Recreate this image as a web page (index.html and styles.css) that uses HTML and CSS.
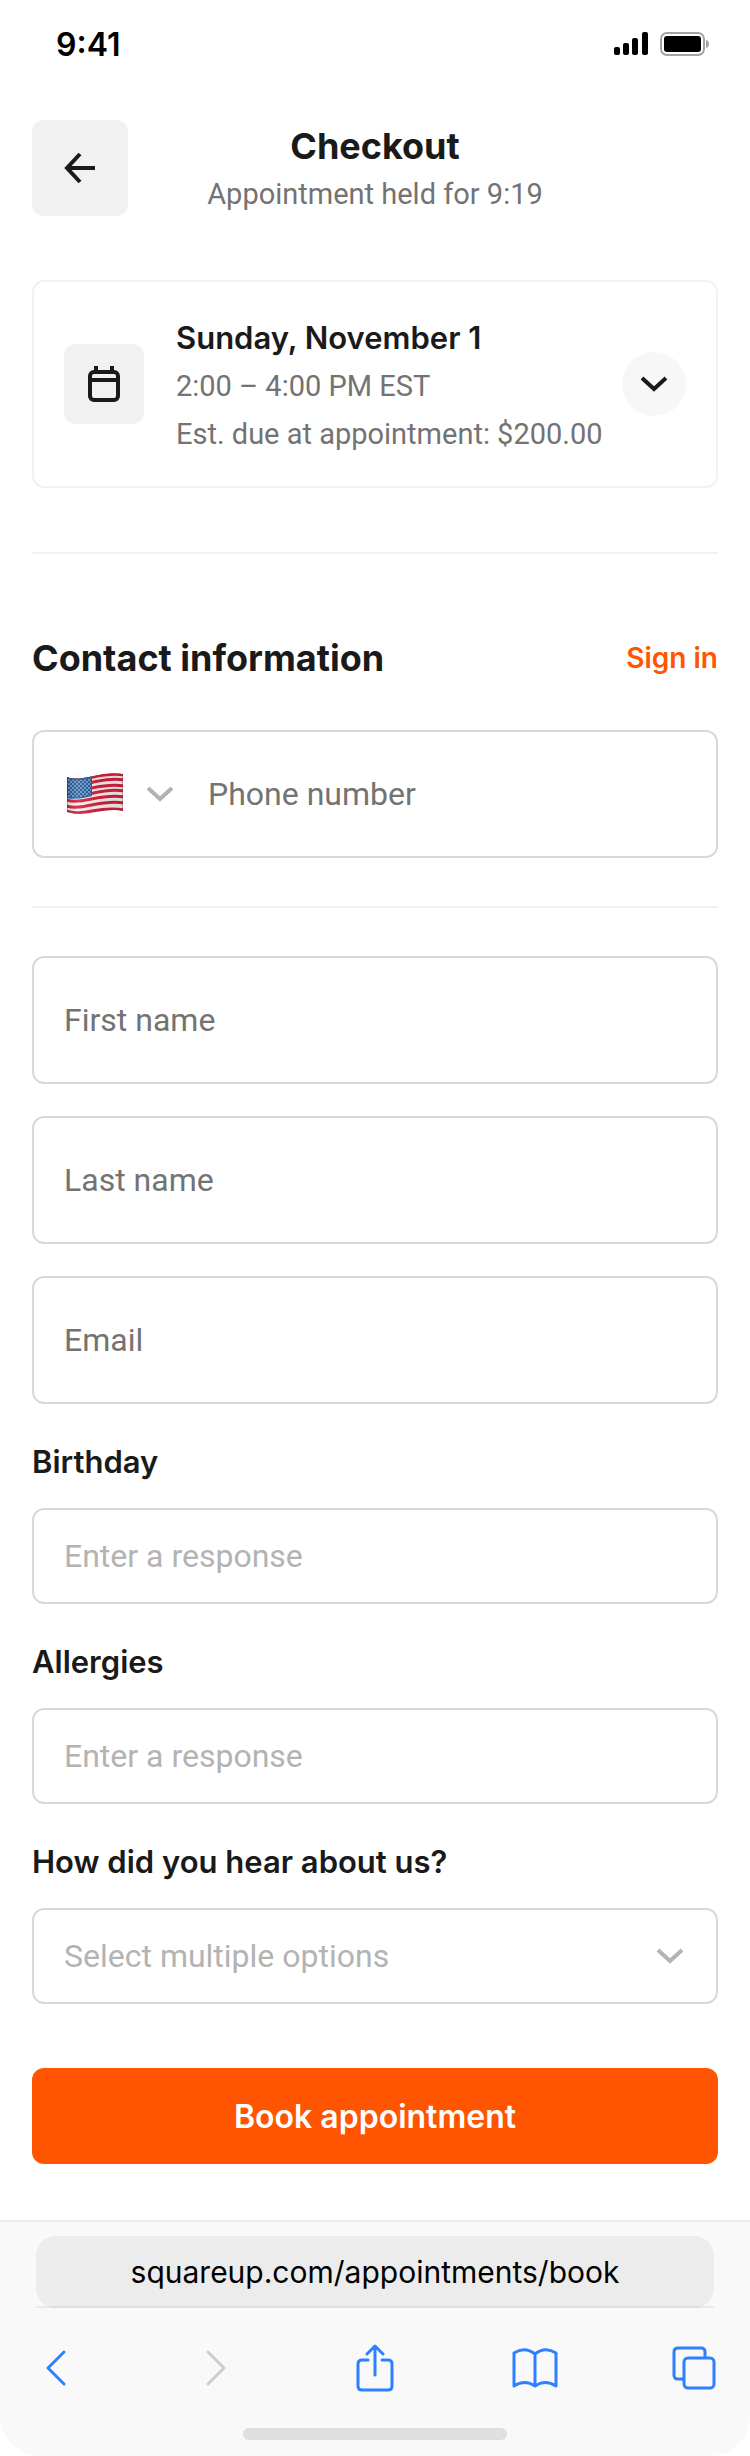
FILE: index.html
```html
<!DOCTYPE html>
<html lang="en">
<head>
    <meta charset="UTF-8">
    <meta name="viewport" content="width=device-width, initial-scale=1.0">
    <title>Checkout</title>
    <link rel="stylesheet" href="styles.css">
</head>
<body>
    <div class="status-bar">
        <span class="time">9:41</span>
        <div class="status-icons">
            <svg width="36" height="24" viewBox="0 0 36 24">
                <rect x="0" y="15" width="6" height="8" rx="2"/>
                <rect x="9" y="11" width="6" height="12" rx="2"/>
                <rect x="18" y="6" width="6" height="17" rx="2"/>
                <rect x="28" y="0" width="6" height="23" rx="2"/>
            </svg>
            <svg width="50" height="24" viewBox="0 0 50 24">
                <rect x="1" y="1" width="43" height="22" rx="6" fill="none" stroke="#a3a3a3" stroke-width="2"/>
                <rect x="4" y="4" width="37" height="16" rx="3"/>
                <path d="M46 8c4 1 4 7 0 8z" fill="#a3a3a3"/>
            </svg>
        </div>
    </div>

    <header class="header">
        <button class="back" aria-label="Back">
            <svg width="32" height="32" viewBox="0 0 32 32" fill="none" stroke="#1a1a1a" stroke-width="4">
                <path d="M31 16H3M16 2L3 16l13 14"/>
            </svg>
        </button>
        <div class="header-text">
            <h1>Checkout</h1>
            <p>Appointment held for 9:19</p>
        </div>
    </header>

    <main>
        <section class="summary">
            <div class="summary-icon">
                <svg width="32" height="36" viewBox="0 0 32 36" fill="none" stroke="#1a1a1a" stroke-width="4">
                    <rect x="2" y="6" width="28" height="28" rx="4"/>
                    <path d="M2 14h28M8 0v6M24 0v6"/>
                </svg>
            </div>
            <div class="summary-text">
                <h2>Sunday, November 1</h2>
                <p>2:00 – 4:00 PM EST</p>
                <p>Est. due at appointment: $200.00</p>
            </div>
            <button class="expand" aria-label="Show details">
                <svg width="28" height="18" viewBox="0 0 28 18" fill="none" stroke="#1a1a1a" stroke-width="4">
                    <path d="M2 3l12 11L26 3"/>
                </svg>
            </button>
        </section>

        <hr>

        <form class="form">
            <div class="form-title">
                <h2>Contact information</h2>
                <a href="#">Sign in</a>
            </div>

            <div class="phone">
                <button type="button" class="country" aria-label="Country: United States">
                    <svg width="58" height="42" viewBox="0 0 58 42">
                        <defs>
                            <clipPath id="flag">
                                <path d="M1 4C16 10 34-3 57 1V38C38 34 22 45 1 39z"/>
                            </clipPath>
                            <linearGradient id="shade" x1="0" y1="0" x2="1" y2="0">
                                <stop offset="0" stop-color="#000" stop-opacity=".15"/>
                                <stop offset=".2" stop-color="#fff" stop-opacity=".1"/>
                                <stop offset=".6" stop-color="#000" stop-opacity=".08"/>
                                <stop offset="1" stop-color="#000" stop-opacity=".1"/>
                            </linearGradient>
                            <pattern id="stars" width="4" height="4" patternUnits="userSpaceOnUse">
                                <circle cx="1" cy="1" r=".7" fill="#fff"/>
                                <circle cx="3" cy="3" r=".7" fill="#fff"/>
                            </pattern>
                        </defs>
                        <g clip-path="url(#flag)">
                            <rect width="58" height="42" fill="#f5f3f3"/>
                            <g fill="none" stroke="#d8203a" stroke-width="3">
                                <path d="M0 5C16 11 34-2 58 2"/>
                                <path d="M0 11C16 16 34 3 58 7"/>
                                <path d="M0 16C16 21 34 9 58 13"/>
                                <path d="M0 22C16 27 34 14 58 18"/>
                                <path d="M0 27C16 32 34 20 58 24"/>
                                <path d="M0 33C16 38 34 26 58 30"/>
                                <path d="M0 38C16 44 34 32 58 37"/>
                            </g>
                            <path d="M0 3C10 7 18 5 26 3V23C18 25 10 27 0 25z" fill="#1f5a9e"/>
                            <path d="M2 6C10 8 18 7 25 5V22C18 24 10 25 2 24z" fill="url(#stars)"/>
                            <path d="M1 4C16 10 34-3 57 1V38C38 34 22 45 1 39z" fill="url(#shade)" stroke="#5a2530" stroke-opacity=".5"/>
                        </g>
                    </svg>
                    <svg width="28" height="18" viewBox="0 0 28 18" fill="none" stroke="#b3b3b3" stroke-width="4">
                        <path d="M2 3l12 11L26 3"/>
                    </svg>
                </button>
                <input type="tel" placeholder="Phone number" aria-label="Phone number">
            </div>

            <hr>

            <div class="names">
                <input class="field tall" type="text" placeholder="First name" aria-label="First name">
                <input class="field tall" type="text" placeholder="Last name" aria-label="Last name">
                <input class="field tall" type="email" placeholder="Email" aria-label="Email">
            </div>

            <label for="birthday">Birthday</label>
            <input class="field" id="birthday" type="text" placeholder="Enter a response">

            <label for="allergies">Allergies</label>
            <input class="field" id="allergies" type="text" placeholder="Enter a response">

            <label for="referral">How did you hear about us?</label>
            <div class="select">
                <select class="field" id="referral">
                    <option>Select multiple options</option>
                </select>
                <svg width="28" height="18" viewBox="0 0 28 18" fill="none" stroke="#b3b3b3" stroke-width="4">
                    <path d="M2 3l12 11L26 3"/>
                </svg>
            </div>

            <button type="submit" class="book">Book appointment</button>
        </form>
    </main>

    <footer class="browser">
        <div class="address-row">
            <div class="address">squareup.com/appointments/book</div>
        </div>
        <nav class="toolbar">
            <button aria-label="Previous page">
                <svg width="22" height="38" viewBox="0 0 22 38">
                    <path d="M19 3L3 19l16 16"/>
                </svg>
            </button>
            <button aria-label="Next page" class="off">
                <svg width="22" height="38" viewBox="0 0 22 38">
                    <path d="M3 3l16 16L3 35"/>
                </svg>
            </button>
            <button aria-label="Share">
                <svg width="38" height="48" viewBox="0 0 38 48">
                    <path d="M12 16H6q-4 0-4 4v22q0 4 4 4h26q4 0 4-4V20q0-4-4-4h-6M19 31V3M11 10l8-8 8 8"/>
                </svg>
            </button>
            <button aria-label="Bookmarks">
                <svg width="46" height="42" viewBox="0 0 46 42">
                    <path d="M23 7Q13-1 2 6V39Q13 32 23 39Q33 32 44 39V6Q33-1 23 7V39"/>
                </svg>
            </button>
            <button aria-label="Tabs">
                <svg width="44" height="44" viewBox="0 0 44 44">
                    <path d="M11 33H6q-4 0-4-4V6q0-4 4-4h23q4 0 4 4v5"/>
                    <rect x="12" y="12" width="30" height="30" rx="4"/>
                </svg>
            </button>
        </nav>
        <div class="home-bar"></div>
    </footer>
</body>
</html>
```

FILE: styles.css
```css
* {
    box-sizing: border-box;
}
body {
    margin: 0;
    font-family: Roboto, "Liberation Sans", sans-serif;
    font-size: 29px;
    color: #1a1a1a;
    background: white;
}
h1, h2, p {
    margin: 0;
}
h1, h2, label, .time, .form-title a, .book, .address {
    font-family: Inter, "Liberation Sans", sans-serif;
}
button {
    padding: 0;
    border: none;
    background: none;
    cursor: pointer;
}
svg {
    display: block;
    flex-shrink: 0;
}
hr {
    margin: 0;
    border: none;
    border-top: 2px solid #f1f1f1;
}

.status-bar {
    display: flex;
    justify-content: space-between;
    align-items: center;
    height: 88px;
    padding: 0 40px 0 56px;
    color: black;
}
.time {
    font-size: 32px;
    font-weight: 600;
}
.status-icons {
    display: flex;
    gap: 10px;
}

.header {
    display: grid;
    grid-template-columns: 96px 1fr 96px;
    align-items: start;
    padding: 32px 32px 62px;
}
.back {
    display: flex;
    align-items: center;
    justify-content: center;
    height: 96px;
    border-radius: 12px;
    background: #f1f1f1;
}
.header-text {
    padding-top: 2px;
    text-align: center;
}
.header-text h1 {
    font-size: 36px;
    line-height: 48px;
}
.header-text p {
    line-height: 48px;
    color: #737373;
}

main {
    padding: 0 32px 56px;
}
.summary {
    display: flex;
    align-items: center;
    gap: 32px;
    margin-bottom: 64px;
    padding: 28px 30px;
    border: 2px solid #f1f1f1;
    border-radius: 12px;
}
.summary-icon {
    display: flex;
    align-items: center;
    justify-content: center;
    width: 80px;
    height: 80px;
    border-radius: 12px;
    background: #f1f1f1;
}
.summary-text {
    flex: 1;
    padding-top: 4px;
}
.summary-text h2 {
    font-size: 31px;
    font-weight: 600;
    line-height: 48px;
}
.summary-text p {
    line-height: 48px;
    color: #737373;
}
.expand {
    display: flex;
    align-items: center;
    justify-content: center;
    width: 64px;
    height: 64px;
    margin-left: -32px;
    border-radius: 50%;
    background: #f7f7f7;
}

.form-title {
    display: flex;
    align-items: center;
    justify-content: space-between;
    padding: 80px 0 48px;
}
.form-title h2 {
    font-size: 36px;
    line-height: 48px;
}
.form-title a {
    font-size: 28px;
    font-weight: 600;
    color: #ff5500;
    text-decoration: none;
}
.phone {
    display: flex;
    height: 128px;
    margin-bottom: 48px;
    padding: 0 32px;
    border: 2px solid #d9d9d9;
    border-radius: 12px;
}
.country {
    display: flex;
    align-items: center;
    gap: 22px;
    margin-right: 34px;
}
.phone input {
    flex: 1;
    min-width: 0;
    padding: 0;
    border: none;
    font: inherit;
    font-size: 32px;
}
.names {
    display: grid;
    gap: 32px;
    margin-top: 48px;
}
.field {
    display: block;
    width: 100%;
    height: 96px;
    padding: 0 30px;
    border: 2px solid #d9d9d9;
    border-radius: 12px;
    background: white;
    font: inherit;
    font-size: 32px;
}
.tall {
    height: 128px;
}
::placeholder {
    color: #b3b3b3;
    opacity: 1;
}
.phone ::placeholder,
.tall::placeholder {
    color: #737373;
}
label {
    display: block;
    padding: 34px 0 22px;
    font-size: 31px;
    font-weight: 600;
    line-height: 48px;
}
.select {
    display: grid;
    align-items: center;
}
.select > * {
    grid-area: 1 / 1;
}
.select select {
    appearance: none;
    color: #b3b3b3;
}
.select svg {
    justify-self: end;
    margin-right: 34px;
    pointer-events: none;
}
.book {
    width: 100%;
    height: 96px;
    margin-top: 64px;
    border-radius: 12px;
    background: #ff5500;
    color: white;
    font-size: 32px;
    font-weight: 600;
}

.browser {
    padding: 14px 36px 16px;
    border-top: 2px solid #ebebeb;
    border-radius: 0 0 40px 40px;
    background: #f9f9f9;
}
.address-row {
    position: relative;
}
/* hairline over the bottom edge of the address pill */
.address-row::after {
    content: "";
    position: absolute;
    right: 0;
    bottom: 0;
    left: 0;
    height: 2px;
    background: rgba(0, 0, 0, 0.06);
}
.address {
    border-radius: 20px;
    background: #ececec;
    color: black;
    font-size: 30px;
    line-height: 72px;
    text-align: center;
}
.toolbar {
    display: flex;
    align-items: center;
    justify-content: space-between;
    height: 120px;
    margin: 0 -4px;
}
.toolbar button {
    display: flex;
    justify-content: center;
    width: 48px;
}
.toolbar svg {
    fill: none;
    stroke: #2f80ff;
    stroke-width: 3;
    stroke-linecap: round;
    stroke-linejoin: round;
}
.toolbar .off svg {
    stroke: #cccccc;
}
.home-bar {
    width: 264px;
    height: 12px;
    margin: 0 auto;
    border-radius: 6px;
    background: #dfdfdf;
}
```
